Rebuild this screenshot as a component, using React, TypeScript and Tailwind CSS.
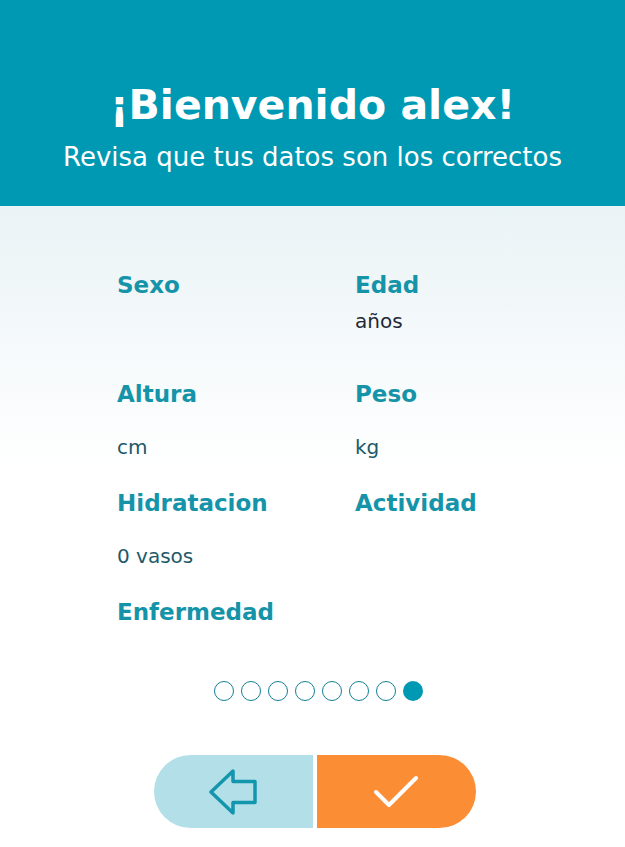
const font = { fontFamily: '"DejaVu Sans", Verdana, sans-serif' };

function Field({
  label,
  value,
  valueGap = 'mt-[27px]',
  valueClass = 'text-[#1d5a68]',
}: {
  label: string;
  value?: string;
  valueGap?: string;
  valueClass?: string;
}) {
  return (
    <div className="h-[109px]">
      <div className="text-[23px] font-bold leading-[28px] text-[#1594a9]">{label}</div>
      {value && (
        <div className={`${valueGap} text-[20px] leading-[24px] ${valueClass}`}>{value}</div>
      )}
    </div>
  );
}

function BackArrow() {
  return (
    <svg width="50" height="48" viewBox="0 0 50 48" fill="none">
      <path
        d="M3 24 L25 3 L25 13.5 L47 13.5 L47 34.5 L25 34.5 L25 45 Z"
        stroke="#1296ad"
        strokeWidth="3.5"
        strokeLinejoin="round"
      />
    </svg>
  );
}

function CheckMark() {
  return (
    <svg width="46" height="34" viewBox="0 0 46 34" fill="none">
      <path
        d="M3 17 L16 30 L43 3"
        stroke="white"
        strokeWidth="4"
        strokeLinecap="round"
        strokeLinejoin="round"
      />
    </svg>
  );
}

export default function App() {
  return (
    <div className="min-h-[847px] w-[625px] bg-white" style={font}>
      <header className="flex h-[206px] flex-col items-center bg-[#0099b3] pt-[82px] text-white">
        <h1 className="text-[41px] font-bold leading-[46px]">¡Bienvenido alex!</h1>
        <p className="mt-[14px] text-[26px] leading-[30px]">Revisa que tus datos son los correctos</p>
      </header>

      <div className="bg-gradient-to-b from-[#eaf3f6] to-white to-[265px] pt-[65px]">
        <div className="ml-[117px] grid grid-cols-[238px_1fr]">
          <Field label="Sexo" />
          <Field label="Edad" value="años" valueGap="mt-[10px]" valueClass="text-[#1f2a36]" />
          <Field label="Altura" value="cm" />
          <Field label="Peso" value="kg" />
          <Field label="Hidratacion" value="0 vasos" />
          <Field label="Actividad" />
          <Field label="Enfermedad" />
        </div>

        <div className="mt-[-26px] flex justify-center gap-[7px] pl-[11px]">
          {Array.from({ length: 8 }).map((_, i) => (
            <span
              key={i}
              className={
                i === 7
                  ? 'h-[20px] w-[20px] rounded-full bg-[#0099b3]'
                  : 'h-[20px] w-[20px] rounded-full border border-[#137f94] bg-white'
              }
            />
          ))}
        </div>

        <div className="mt-[54px] flex justify-center gap-[4px] pb-[20px] pl-[4px]">
          <button className="flex h-[73px] w-[159px] items-center justify-center rounded-l-full bg-[#b3dfe8]">
            <BackArrow />
          </button>
          <button className="flex h-[73px] w-[159px] items-center justify-center rounded-r-full bg-[#fb8d35]">
            <CheckMark />
          </button>
        </div>
      </div>
    </div>
  );
}
